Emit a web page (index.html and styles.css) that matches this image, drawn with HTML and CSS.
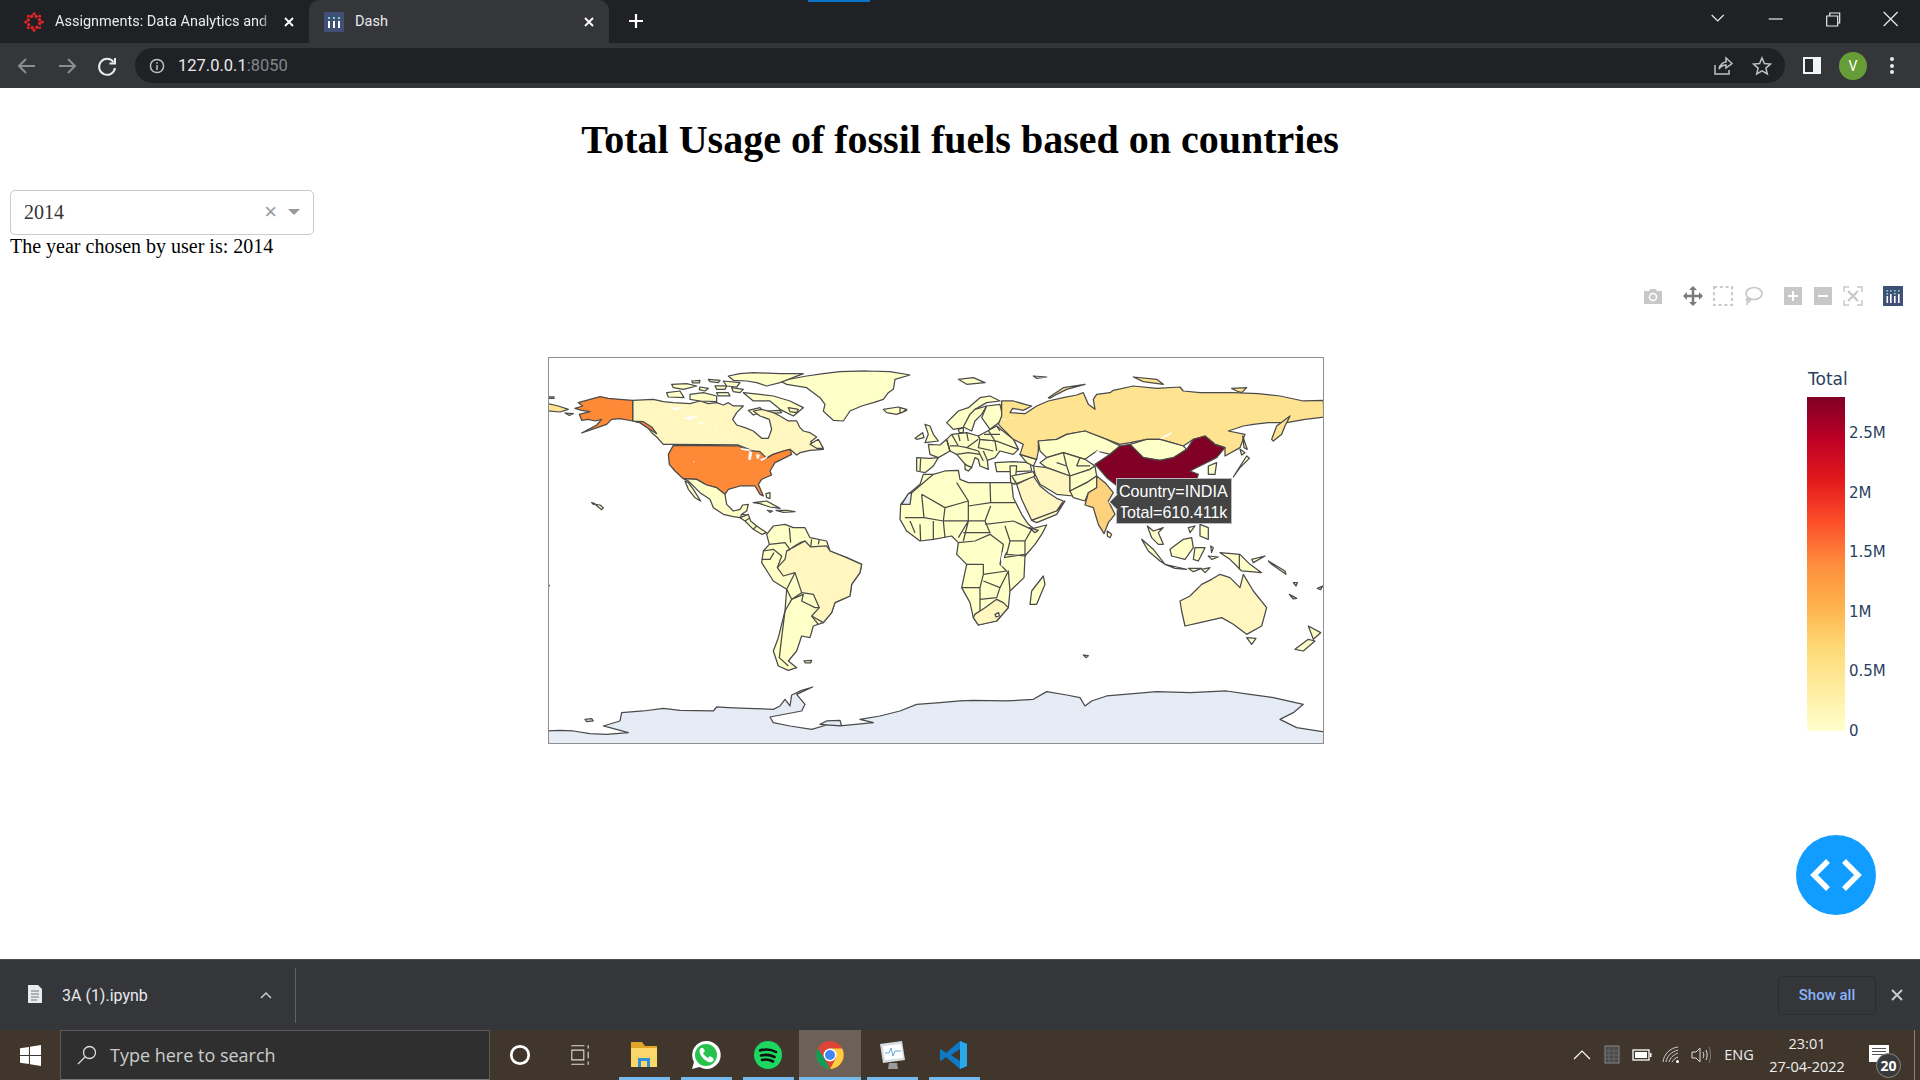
FILE: index.html
```html
<!DOCTYPE html>
<html lang="en">
	<head>
		<meta charset="utf-8">
		<title>Dash</title>
		<link rel="stylesheet" href="styles.css">
	</head>
	<body>
		<div class="loading-line"></div>
		<!-- browser tabs -->
		<div class="tabstrip">
			<div class="tab">
				<svg class="favicon" viewBox="0 0 24 24"><g fill="#e72429"><circle cx="12" cy="12" r="7.2" fill="none" stroke="#e72429" stroke-width="3.6" stroke-dasharray="3.6 2.05"/><circle cx="12" cy="2" r="1.8"/><circle cx="12" cy="22" r="1.8"/><circle cx="2" cy="12" r="1.8"/><circle cx="22" cy="12" r="1.8"/><circle cx="5" cy="5" r="1.6"/><circle cx="19" cy="5" r="1.6"/><circle cx="5" cy="19" r="1.6"/><circle cx="19" cy="19" r="1.6"/></g></svg>
				<span class="tab-title fade">Assignments: Data Analytics and</span>
				<svg class="tab-close" viewBox="0 0 12 12"><path d="M2 2L10 10M10 2L2 10"/></svg>
			</div>
			<div class="tab active">
				<svg class="favicon" viewBox="0 0 20 20"><rect width="20" height="20" fill="#3f4f75"/><g fill="#fff"><rect x="4" y="9" width="2" height="7"/><rect x="9" y="9" width="2" height="7"/><rect x="14" y="9" width="2" height="7"/></g><g fill="#7fd6c8"><rect x="4" y="5" width="2" height="2"/><rect x="9" y="5" width="2" height="2"/><rect x="14" y="5" width="2" height="2"/></g></svg>
				<span class="tab-title">Dash</span>
				<svg class="tab-close" viewBox="0 0 12 12"><path d="M2 2L10 10M10 2L2 10"/></svg>
			</div>
			<svg class="new-tab" viewBox="0 0 16 16"><path d="M8 1V15M1 8H15"/></svg>
			<div class="window-controls">
				<svg viewBox="0 0 56 20"><path d="M22 6L28 12L34 6" stroke-width="1"/></svg>
				<svg viewBox="0 0 56 20"><path d="M21 10H35"/></svg>
				<svg viewBox="0 0 56 20"><path d="M22 7H33V17H22ZM25 7V4H35V14H33"/></svg>
				<svg viewBox="0 0 56 20"><path d="M21 3L35 17M35 3L21 17"/></svg>
			</div>
		</div>

		<!-- address bar -->
		<div class="toolbar">
			<svg class="tool dim" viewBox="0 0 40 24"><path d="M28 12H13M19 5L12 12L19 19"/></svg>
			<svg class="tool dim" viewBox="0 0 40 24"><path d="M12 12H27M21 5L28 12L21 19"/></svg>
			<svg class="tool" viewBox="0 0 40 24"><path d="M26.5 8A8 8 0 1 0 28 14M28 4V9.5H22.5" stroke-width="2"/></svg>
			<div class="omnibox">
				<svg class="info" viewBox="0 0 16 16"><circle cx="8" cy="8" r="6.6"/><path d="M8 7V12M8 4.2V5.8"/></svg>
				<span class="url">127.0.0.1<span class="port">:8050</span></span>
				<svg class="omni-btn" viewBox="0 0 20 20"><path d="M2 9V18H16V14M6 13C7 8 11 6 13 6V2L19 7.5L13 12V9C10 9 8 10 6 13Z"/></svg>
				<svg class="omni-btn star" viewBox="0 0 20 20"><path d="M10 2L12.4 7.6L18.5 8.1L13.9 12.1L15.3 18L10 14.9L4.7 18L6.1 12.1L1.5 8.1L7.6 7.6Z"/></svg>
			</div>
			<div class="toolbar-right">
				<div class="side-panel"></div>
				<div class="avatar">V</div>
				<div class="dots"><i></i><i></i><i></i></div>
			</div>
		</div>

		<!-- the dash page -->
		<div class="page">
			<h1>Total Usage of fossil fuels based on countries</h1>
			<div class="dropdown">
				<span class="dropdown-value">2014</span>
				<span class="dropdown-clear">×</span>
				<span class="dropdown-arrow"></span>
			</div>
			<div class="year-text">The year chosen by user is: 2014</div>

			<div class="modebar">
				<div class="modebar-group">
					<svg viewBox="0 0 20 20"><path fill="#c8c8c8" d="M1 5H6L7.5 3H12.5L14 5H19V18H1Z"/><circle cx="10" cy="11" r="4.3" fill="#fff"/><circle cx="10" cy="11" r="2.8" fill="#c8c8c8"/></svg>
				</div>
				<div class="modebar-group">
					<svg viewBox="0 0 20 20"><path fill="none" stroke="#7a7a7a" stroke-width="2.5" d="M10 2V18M2 10H18"/><path fill="#7a7a7a" d="M10 0L14 4H6ZM10 20L14 16H6ZM0 10L4 6V14ZM20 10L16 6V14Z"/></svg>
					<svg viewBox="0 0 20 20"><rect x="1" y="1" width="18" height="18" fill="none" stroke="#c8c8c8" stroke-width="2" stroke-dasharray="3 2.8"/></svg>
					<svg viewBox="0 0 20 20"><ellipse cx="11" cy="7.5" rx="8" ry="6" fill="none" stroke="#c8c8c8" stroke-width="1.7"/><path fill="none" stroke="#c8c8c8" stroke-width="1.7" d="M5 12C2 13 4 17 7 15C8 14 6 12 5 13L4 19"/></svg>
				</div>
				<div class="modebar-group">
					<svg viewBox="0 0 20 20"><path fill="#c8c8c8" fill-rule="evenodd" d="M1 1H19V19H1ZM9 5V9H5V11H9V15H11V11H15V9H11V5Z"/></svg>
					<svg viewBox="0 0 20 20"><path fill="#c8c8c8" fill-rule="evenodd" d="M1 1H19V19H1ZM5 9V11H15V9Z"/></svg>
					<svg viewBox="0 0 20 20"><path fill="none" stroke="#c8c8c8" stroke-width="1.5" d="M1 6V1H6M14 1H19V6M19 14V19H14M6 19H1V14"/><path fill="none" stroke="#c8c8c8" stroke-width="2.2" d="M5 5L15 15M15 5L5 15"/></svg>
				</div>
				<div class="modebar-group">
					<svg viewBox="0 0 20 20"><rect width="20" height="20" fill="#3f4f75"/><g fill="#fff"><rect x="3.5" y="10" width="1.6" height="7"/><rect x="7" y="8" width="1.6" height="9"/><rect x="11" y="10" width="1.6" height="7"/><rect x="15" y="8" width="1.6" height="9"/></g><g fill="#7fd6c8"><rect x="3.5" y="4" width="1.6" height="1.6"/><rect x="7" y="4" width="1.6" height="1.6"/><rect x="11" y="4" width="1.6" height="1.6"/><rect x="15" y="4" width="1.6" height="1.6"/><rect x="3.5" y="7" width="1.6" height="1.6"/><rect x="11" y="7" width="1.6" height="1.6"/></g></svg>
				</div>
			</div>

			<div class="plot">
				<div class="map">
					<svg class="geo" viewBox="0 0 776 387">
						<!-- drawn in 3x units, western half -->
						<g transform="translate(-8 -6) scale(.33333)">
							<path class="nodata" d="M10 1140L60 1138L100 1140L150 1148L200 1150L265 1145L210 1130L190 1125L240 1110L245 1085L310 1080L370 1072L420 1078L520 1080L530 1068L565 1070L620 1072L700 1075L720 1065L735 1045L750 1065L755 1032L785 1018L818 1008L770 1030L795 1060L785 1080L690 1098L700 1115L750 1125L815 1135L860 1122L905 1125L900 1108L860 1110L840 1120L900 1125L1000 1115L960 1105L1020 1095L1080 1080L1130 1060L1200 1055L1260 1050L1300 1048L1400 1050L1480 1045L1520 1022L1580 1032L1620 1040L1635 1065L1655 1050L1700 1035L1780 1028L1850 1022L1950 1025L2060 1020L2130 1030L2200 1040L2290 1060L2260 1085L2220 1105L2270 1130L2370 1145L2370 1195L10 1195Z"/>
							<path class="nodata" d="M135 1105L155 1103L160 1110L140 1112Z"/>

							<!-- greenland and arctic -->
							<path class="land" d="M720 90L800 75L850 68L900 62L980 60L1050 62L1110 72L1065 85L1060 115L1045 125L1030 145L1000 155L965 165L930 180L910 210L880 208L860 190L850 180L855 160L840 140L820 125L800 110L740 100Z"/>
							<path class="land" d="M1030 175L1075 168L1100 178L1070 190L1040 185Z"/>
							<path class="land" d="M565 75L600 68L640 65L720 68L790 68L720 95L680 105L650 95L620 90L580 88Z"/>
							<path class="land" d="M610 125L660 130L700 135L750 150L790 170L760 195L720 175L690 150L640 150Z"/>
							<path class="land" d="M450 130L490 125L530 135L530 152L480 150L450 145Z"/>
							<path class="land" d="M380 125L420 120L432 140L385 138Z"/>
							<path class="land" d="M395 100L440 98L470 105L430 115L400 110Z"/>
							<path class="land" d="M505 85L540 88L535 95L510 92Z"/>
							<path class="land" d="M455 90L480 88L478 96L458 96Z"/>
							<path class="land" d="M525 105L560 105L555 115L530 115Z"/>
							<path class="land" d="M550 90L600 95L590 108L560 105Z"/>
							<path class="land" d="M530 125L565 125L570 135L535 135Z"/>
							<path class="land" d="M575 110L610 115L600 125L580 122Z"/>
							<path class="land" d="M480 108L505 112L495 120L478 116Z"/>
							<path class="land" d="M625 178L660 170L670 182L640 192Z"/>
							<path class="land" d="M680 180L720 178L725 185L690 188Z"/>
							<path class="land" d="M745 170L775 175L770 185L750 182Z"/>

							<!-- north america -->
							<path class="canada" d="M278 148L340 145L370 152L400 155L450 158L480 150L505 158L530 155L550 162L565 155L580 165L610 165L590 185L578 205L590 222L615 230L640 240L665 262L685 262L695 235L688 205L660 195L640 180L665 175L700 185L720 195L745 210L770 210L780 230L790 240L810 245L830 258L812 272L835 290L850 295L810 298L780 305L770 312L750 295L730 300L700 310L670 325L640 300L595 282L400 280L370 280L350 258L335 245L325 232L300 215L278 210Z"/>
							<path class="land" d="M810 280L835 265L850 292L830 292Z"/>
							<path class="white" d="M385 170L430 168L410 178ZM430 200L480 192L450 208ZM470 215L500 212L480 220ZM525 225L535 228L528 232ZM540 250L570 275L550 260Z"/>
							<path class="alaska" d="M278 148L240 145L205 142L180 137L150 145L115 155L128 165L105 172L125 178L150 182L118 190L125 208L145 205L165 210L185 205L170 222L125 246L165 232L200 220L215 205L240 203L278 210L300 215L325 232L350 248L335 228L310 212L278 210Z"/>
							<path class="alaska" d="M400 283L595 285L625 298L660 302L680 322L700 310L730 300L750 295L755 310L725 325L705 335L690 360L695 372L665 385L655 400L670 435L660 430L645 405L600 405L565 415L555 430L530 410L500 402L470 385L430 383L405 360L388 340L385 310Z"/>
							<path class="white" d="M600 290L640 297L625 300L605 296ZM628 300L637 304L632 328L624 325ZM648 308L660 312L655 325L650 322ZM660 325L685 316L680 322L665 330Z"/>
							<path class="land" d="M430 383L470 385L500 402L530 410L555 430L560 460L580 480L600 475L608 462L625 460L620 480L605 490L600 500L580 497L550 490L520 470L510 445L480 425L445 390Z"/>
							<path class="land" d="M445 395L460 415L482 450L465 440L445 415L435 390Z"/>
							<path class="land" d="M600 500L625 490L632 510L650 525L680 545L665 550L640 535L615 510Z"/>
							<path class="border" d="M605 490L620 492M615 510L630 500M640 535L650 525"/>
							<path class="land" d="M640 455L680 450L720 472L690 468L660 458Z"/>
							<path class="land" d="M708 478L740 478L765 482L730 484Z"/>
							<path class="land" d="M682 478L698 480L690 484Z"/>
							<path class="land" d="M678 428L690 425L690 442L680 440Z"/>
							<path class="land" d="M155 455L165 458L160 460ZM165 460L180 462L190 470L185 476L175 468Z"/>
							<path class="russia" d="M10 155L55 165L85 175L60 183L10 178Z"/>
							<path class="land" d="M10 137L42 138L42 142L10 142Z"/>
							<path class="land" d="M75 186L100 188L88 193Z"/>

							<!-- south america -->
							<path class="land" d="M680 550L700 525L735 520L760 530L795 530L810 560L860 570L870 600L920 620L965 640L960 665L935 700L930 735L885 755L875 785L850 815L820 825L810 860L785 855L780 870L770 900L745 930L770 950L745 958L715 945L700 900L715 860L735 780L740 715L700 690L665 635L670 600L688 580Z"/>
							<path class="canada" d="M740 600L795 570L812 588L860 585L870 600L920 620L965 640L960 665L935 700L930 735L885 755L875 785L850 815L815 795L838 770L820 730L785 725L765 665L730 675L712 650L735 625Z"/>
							<path class="border" d="M688 580L735 575L750 595L740 600M748 530L752 575M795 570L780 575L755 590M812 588L815 565M835 580L838 565M670 600L700 595L725 615L712 650M665 625L690 625L702 605M740 715L765 665M740 715L755 745L785 725M755 745L790 730L785 750L825 770L838 770M755 745L735 780L725 860L718 920L745 945M815 795L835 820"/>
							<path class="land" d="M792 930L815 928L812 936L796 936Z"/>
							<path class="white" d="M460 330L465 332L460 334Z"/>
							<path class="border" d="M25 700L29 706"/>
						</g>

						<!-- eastern half -->
						<g transform="translate(352 -6) scale(.33333)">
							<!-- africa -->
							<path class="land" d="M70 370L100 370L135 360L175 358L180 385L205 395L270 395L335 395L340 440L365 490L385 520L400 532L440 522L425 550L405 580L375 615L372 680L330 720L325 770L290 810L235 822L220 800L210 755L185 710L200 640L170 610L175 575L155 555L100 565L60 570L20 540L0 505L2 460L30 425L60 400Z"/>
							<path class="nodata" d="M5 460L25 428L35 425L30 460Z"/>
							<path class="nodata" d="M388 530L415 538L405 545Z"/>
							<path class="border" d="M100 370L65 400L35 425M65 430L72 500L15 500M65 430L135 470L205 450L170 395M135 470L130 510L72 500M205 450L205 510L130 510M270 395L272 455L205 465M272 455L345 455M272 465L255 510L205 510M255 520L340 510M130 510L135 560M100 510L100 565M60 520L62 570M30 510L45 545M175 560L205 510M205 510L190 570M190 545L270 545L255 510M175 575L225 570L270 550L310 580L300 640L320 660L250 670L250 640L200 640M310 620L375 610M185 710L240 710L250 670M240 710L240 780L225 790M240 745L290 740L300 710L250 690M290 745L320 768M330 720L325 660L300 710M340 510L395 535L375 570L330 570L315 525M375 570L375 615L320 610L330 570M300 640L320 605"/>
							<path class="canada" d="M225 790L240 780L255 770L290 745L310 755L325 770L290 810L235 822L220 800Z"/>
							<path class="land" d="M285 790L296 785L298 795L288 798Z"/>
							<path class="land" d="M390 760L395 720L430 675L435 700L410 760Z"/>
							<path class="white" d="M303 625L306 605L314 600L310 640L305 650Z"/>

							<!-- europe -->
							<path class="land" d="M50 320L90 322L115 320L100 345L75 365L50 360Z"/>
							<path class="border" d="M62 322L60 360"/>
							<path class="land" d="M85 280L120 282L140 265L150 300L115 320L90 310Z"/>
							<path class="land" d="M75 220L90 225L100 250L115 270L75 275L85 250Z"/>
							<path class="land" d="M45 262L68 245L72 260L50 265Z"/>
							<path class="land" d="M140 265L155 250L200 245L235 255L240 265L290 270L355 295L340 310L300 300L285 320L262 328L265 355L240 345L235 325L225 320L215 350L200 345L170 310L150 300Z"/>
							<path class="border" d="M140 265L150 300M155 250L175 285L200 290L235 265M175 250L180 270M200 245L205 270M240 265L235 290L280 300M200 290L235 300M235 300L250 330M205 305L240 310M170 310L205 305M285 270L290 300M340 265L355 295M150 285L175 285M250 300L262 328"/>
							<path class="land" d="M235 255L290 225L340 265L355 295L290 270L240 265Z"/>
							<path class="border" d="M265 238L285 270M290 225L300 240M252 250L300 250"/>
							<path class="land" d="M140 215L175 180L205 170L240 140L270 135L300 150L260 155L225 175L210 190L190 230L160 235Z"/>
							<path class="land" d="M190 228L210 190L225 175L260 165L245 190L225 210L215 240Z"/>
							<path class="land" d="M260 165L300 160L310 205L270 235L245 200Z"/>
							<path class="land" d="M175 235L190 230L190 245L178 245Z"/>
							<path class="land" d="M285 335L340 332L390 335L395 360L340 362L290 362Z"/>
							<path class="land" d="M195 340L215 350L205 360L195 355Z"/>
							<path class="land" d="M330 345L350 345L345 400L332 395Z"/>
							<path class="land" d="M360 310L410 325L400 345L380 335L372 325Z"/>
							<path class="land" d="M0 170L20 175L5 185L0 185Z"/>

							<!-- russia -->
							<path class="russia" d="M305 150L340 150L375 160L395 165L370 178L338 172L330 185L375 188L410 165L445 150L490 140L530 132L550 125L565 160L585 175L580 145L590 130L630 125L640 118L700 105L770 112L840 108L850 120L900 125L1000 125L1075 128L1140 135L1210 150L1270 148L1272 198L1215 205L1160 215L1105 215L1060 220L1030 225L985 240L1035 250L1020 290L975 315L975 290L945 280L915 255L880 265L850 285L815 275L780 265L740 265L690 275L660 280L620 265L555 240L500 250L470 265L415 270L415 300L410 325L360 310L370 280L340 265L295 220L305 195Z"/>
							<path class="white" d="M780 262L815 242L812 250L785 265ZM305 205L322 205L315 208ZM330 197L342 205L332 202Z"/>
							<path class="russia" d="M1115 265L1130 225L1170 195L1155 225L1145 250L1120 270Z"/>
							<path class="russia" d="M445 140L490 110L555 100L500 115L470 130L450 142Z"/>
							<path class="land" d="M175 85L220 80L255 95L200 100Z"/>
							<path class="land" d="M400 75L440 78L410 82Z"/>
							<path class="russia" d="M700 78L770 85L790 100L730 92Z"/>
							<path class="russia" d="M995 112L1040 110L1025 125L1010 120Z"/>
							<path class="russia" d="M1028 255L1042 295L1032 290Z"/>

							<!-- asia -->
							<path class="land" d="M415 270L470 265L500 250L555 240L620 265L660 285L630 310L590 300L555 325L490 305L440 320L420 300Z"/>
							<path class="white" d="M585 302L615 295L590 305Z"/>
							<path class="land" d="M440 320L490 305L555 325L585 345L570 355L510 375L440 350L420 335Z"/>
							<path class="border" d="M490 305L500 345L510 375M470 335L500 345M540 320L530 345L570 345"/>
							<path class="land" d="M690 280L740 265L780 265L850 285L860 295L820 320L780 328L730 320Z"/>
							<path class="canada" d="M400 345L440 350L510 375L510 420L520 435L470 430L420 400L405 370Z"/>
							<path class="land" d="M510 375L570 355L585 345L590 375L560 395L510 420Z"/>
							<path class="land" d="M510 420L560 395L590 375L590 410L565 425L555 450L520 440Z"/>
							<path class="canada" d="M350 400L400 375L420 405L445 425L470 442L490 450L470 480L395 508L365 445Z"/>
							<path class="land" d="M335 375L400 362L405 375L350 398Z"/>
							<path class="land" d="M395 508L470 480L495 450L470 490L410 515Z"/>
							<path class="india" d="M590 375L615 395L640 425L625 450L645 490L625 515L612 548L595 520L580 470L555 462L565 425L590 410Z"/>
							<path class="land" d="M622 540L635 550L630 560L622 555Z"/>
							<path class="china" d="M585 340L630 310L660 285L690 280L730 320L780 328L820 320L860 295L880 265L915 255L945 280L975 290L950 320L900 345L870 360L895 370L890 385L860 440L800 440L700 440L645 400L620 380L590 345Z"/>
							<path class="land" d="M925 345L950 335L945 370L925 370Z"/>
							<path class="land" d="M1005 370L1040 315L1048 322L1020 350L1000 378Z"/>
							<path class="land" d="M1020 295L1035 305L1025 312Z"/>
							<path class="land" d="M742 525L760 540L790 530L775 545L790 580L775 580L755 560Z"/>

							<!-- islands -->
							<path class="land" d="M725 565L760 595L795 640L780 630L745 600Z"/>
							<path class="land" d="M795 640L830 648L860 655L825 652Z"/>
							<path class="land" d="M810 595L850 565L875 560L880 590L855 625L815 615Z"/>
							<path class="land" d="M885 590L915 590L895 630L880 625Z"/>
							<path class="land" d="M900 520L925 530L925 565L900 555Z"/>
							<path class="land" d="M865 652L905 652L880 662Z"/>
							<path class="land" d="M905 655L930 650L915 665Z"/>
							<path class="land" d="M925 615L955 618L935 625Z"/>
							<path class="land" d="M932 585L940 590L935 605Z"/>
							<path class="land" d="M865 530L885 525L870 545Z"/>
							<path class="land" d="M960 605L1020 610L1050 640L1085 665L1025 660L990 625Z"/>
							<path class="border" d="M1018 610L1018 655"/>
							<path class="land" d="M1055 625L1095 615L1060 635Z"/>
							<path class="land" d="M1105 630L1155 660L1158 670L1115 640Z"/>
							<path class="land" d="M1180 695L1192 695L1188 705Z"/>
							<path class="land" d="M1252 712L1268 705L1262 716Z"/>
							<path class="land" d="M1168 730L1190 742L1180 744Z"/>
							<path class="land" d="M550 912L565 914L558 920Z"/>

							<!-- australia, new zealand -->
							<path class="canada" d="M840 750L870 735L905 700L935 685L960 670L990 680L1020 710L1030 670L1060 720L1100 770L1085 825L1040 850L1000 820L965 800L900 815L855 825L845 780Z"/>
							<path class="land" d="M1040 860L1068 862L1055 880Z"/>
							<path class="land" d="M1185 895L1225 865L1245 870L1210 900Z"/>
							<path class="land" d="M1225 825L1262 845L1240 865Z"/>
						</g>
					</svg>
					<div class="hover-label">Country=INDIA<br>Total=610.411k</div>
				</div>

				<div class="colorbar">
					<div class="colorbar-title">Total</div>
					<div class="colorbar-body">
						<div class="colorbar-scale"></div>
						<div class="colorbar-ticks">
							<span>2.5M</span>
							<span>2M</span>
							<span>1.5M</span>
							<span>1M</span>
							<span>0.5M</span>
							<span>0</span>
						</div>
					</div>
				</div>
			</div>

			<div class="debug-btn">
				<svg viewBox="0 0 80 80"><path d="M32 26L18 40L32 54M48 26L62 40L48 54"/></svg>
			</div>
		</div>

		<!-- downloads shelf -->
		<div class="downloads">
			<svg class="file-icon" viewBox="0 0 14 18"><path fill="#e8eaed" d="M0 0H10L14 4V18H0Z"/><path stroke="#777" d="M3 6H11M3 9H11M3 12H11M3 15H9"/></svg>
			<span class="file-name">3A (1).ipynb</span>
			<svg class="file-caret" viewBox="0 0 12 8"><path d="M1 7L6 2L11 7"/></svg>
			<div class="shelf-sep"></div>
			<div class="show-all">Show all</div>
			<svg class="shelf-close" viewBox="0 0 12 12"><path d="M1 1L11 11M11 1L1 11"/></svg>
		</div>

		<!-- windows taskbar -->
		<div class="taskbar">
			<div class="start">
				<svg viewBox="0 0 20 20"><path fill="#fff" d="M0 3L8.5 1.8V9.5H0ZM9.5 1.6L20 0V9.5H9.5ZM0 10.5H8.5V18.2L0 17ZM9.5 10.5H20V20L9.5 18.4Z"/></svg>
			</div>
			<div class="search">
				<svg viewBox="0 0 20 20"><circle cx="12.5" cy="7.5" r="6" fill="none" stroke="#ddd" stroke-width="1.3"/><path stroke="#ddd" stroke-width="1.3" d="M8 12L1 19"/></svg>
				<span>Type here to search</span>
			</div>
			<div class="task-btn"><svg viewBox="0 0 22 22"><circle cx="11" cy="11" r="8" fill="none" stroke="#fff" stroke-width="2.5"/></svg></div>
			<div class="task-btn"><svg viewBox="0 0 22 22"><path fill="none" stroke="#ddd" d="M3 2.5H15M3 19.5H15M3.5 6.5H14.5V15.5H3.5ZM18.5 2V5M18.5 8V14M18.5 17V20"/></svg></div>
			<div class="app open">
				<svg viewBox="0 0 30 30"><path fill="#e0a526" d="M2 2H13L16 6H28V14H2Z"/><path fill="#fbd66a" d="M2 8H28V27H2Z"/><path fill="#2f8fd8" d="M9 27V18H21V27H18V21H12V27Z"/></svg>
			</div>
			<div class="app open">
				<svg viewBox="0 0 30 30"><path fill="#fff" d="M15 1A14 14 0 0 0 3 22L1 29L8.5 27A14 14 0 1 0 15 1Z"/><circle cx="15" cy="15" r="11" fill="#27c24c"/><path fill="#fff" d="M10 8C8 10 8 13 11 17C14 21 18 23 21 22C23 21 23 19 22 18L19 16L17 18C15 17 13 15 12 13L14 11L12 8Z"/></svg>
			</div>
			<div class="app open">
				<svg viewBox="0 0 30 30"><circle cx="15" cy="15" r="14" fill="#1ed760"/><path fill="none" stroke="#111" stroke-width="2.6" stroke-linecap="round" d="M7 10.5C12 9 18 9 23 12M8 15.5C12 14.5 17 14.5 21.5 17M9 20C13 19 16.5 19.5 20 21.5"/></svg>
			</div>
			<div class="app open active">
				<svg viewBox="0 0 30 30"><circle cx="15" cy="15" r="14" fill="#db4437"/><path fill="#0f9d58" d="M15 29A14 14 0 0 1 2.9 8L9 18L15 29Z"/><path fill="#ffcd40" d="M15 29L21 18L15 8.5H27.1A14 14 0 0 1 15 29Z"/><circle cx="15" cy="15" r="6.5" fill="#fff"/><circle cx="15" cy="15" r="5" fill="#4285f4"/></svg>
			</div>
			<div class="app open">
				<svg viewBox="0 0 30 30"><path fill="#d8dde2" d="M3 4L25 1L28 20L6 23Z"/><path fill="#fff" d="M6 6L24 4L26 18L8 20Z"/><path fill="none" stroke="#5fa8d8" d="M8 13L12 13L14 8L16 16L18 11L24 11"/><path fill="#9a9a9a" d="M12 23H20L21 29H11Z"/></svg>
			</div>
			<div class="app open">
				<svg viewBox="0 0 30 30"><path fill="#0e7ac4" d="M21 1L28 4V26L21 29L7 17L2 21L1 20V10L2 9L7 13ZM21 9L12 15L21 21Z"/><path fill="#29a9ec" d="M21 1L28 4V26L21 29Z"/></svg>
			</div>

			<div class="tray">
				<div class="tray-item"><svg viewBox="0 0 20 20"><path fill="none" stroke="#fff" stroke-width="1.2" d="M2 14L10 6L18 14"/></svg></div>
				<div class="tray-item"><svg viewBox="0 0 20 20"><rect x="3" y="1" width="14" height="17" fill="#4a4a4a" stroke="#888"/><path stroke="#666" d="M3 6H17M3 10H17M3 14H17M7 1V18M12 1V18"/></svg></div>
				<div class="tray-item"><svg viewBox="0 0 20 20"><rect x="1" y="5" width="16" height="10" fill="none" stroke="#fff" stroke-width="1.3"/><rect x="3" y="7" width="12" height="6" fill="#fff"/><rect x="18" y="8" width="1.5" height="4" fill="#fff"/></svg></div>
				<div class="tray-item"><svg viewBox="0 0 20 20"><path fill="none" stroke="#ccc" d="M1 17C2 9 8 3 16 2M4 17C5 11 9 7 16 5M7 17C8 13 11 10 16 8M10 17C11 15 13 13 16 12"/><circle cx="15.5" cy="16.5" r="1.5" fill="#fff"/></svg></div>
				<div class="tray-item narrow"><svg viewBox="0 0 20 20"><path fill="none" stroke="#ddd" d="M1 7H5L9 3V17L5 13H1ZM12 7C13 9 13 11 12 13M15 5C16.5 8 16.5 12 15 15"/><path fill="none" stroke="#777" d="M18 2C20 7 20 13 18 18"/></svg></div>
				<div class="tray-eng">ENG</div>
				<div class="clock">
					<span>23:01</span>
					<span>27-04-2022</span>
				</div>
				<div class="notify">
					<span class="notify-msg"><i></i><i></i><i></i></span>
					<span class="notify-count">20</span>
				</div>
				<div class="show-desktop"></div>
			</div>
		</div>
	</body>
</html>
```

FILE: styles.css
```css
* {
	box-sizing: border-box;
}
body {
	margin: 0;
	height: 1080px;
	display: flex;
	flex-direction: column;
	overflow: hidden;
	background-color: white;
	font-family: "Liberation Serif", serif;
}
svg {
	display: block;
}
.loading-line {
	position: absolute;
	top: 0;
	left: 808px;
	width: 62px;
	height: 2px;
	background-color: #0b74c9;
}

/* tabs */
.tabstrip {
	height: 43px;
	flex: none;
	display: flex;
	align-items: stretch;
	padding-left: 9px;
	background-color: #202124;
	color: #e8eaed;
	font-family: Roboto, sans-serif;
	font-size: 14.5px;
}
.tab {
	width: 300px;
	display: flex;
	align-items: center;
	padding: 0 14px 0 15px;
	gap: 11px;
}
.tab.active {
	background-color: #35363a;
	border-radius: 10px 10px 0 0;
}
.favicon {
	width: 20px;
	height: 20px;
	flex: none;
}
.tab-title {
	flex: 1;
	white-space: nowrap;
}
.fade {
	-webkit-mask-image: linear-gradient(to right, black 94%, transparent 101%);
	mask-image: linear-gradient(to right, black 94%, transparent 101%);
}
.tab-close {
	width: 12px;
	height: 12px;
	flex: none;
}
.tab-close path {
	stroke: white;
	stroke-width: 1.8;
}
.new-tab {
	width: 16px;
	height: 16px;
	margin: 13px 0 0 19px;
}
.new-tab path {
	stroke: white;
	stroke-width: 2.2;
}
.window-controls {
	margin-left: auto;
	display: flex;
	align-items: flex-start;
	padding: 9px 0 0 0;
	margin-right: 1px;
}
.window-controls svg {
	width: 57.4px;
	height: 20px;
}
.window-controls path {
	fill: none;
	stroke: #e8eaed;
	stroke-width: 1.2;
}

/* address bar */
.toolbar {
	height: 45px;
	flex: none;
	display: flex;
	align-items: center;
	padding-left: 7px;
	background-color: #35363a;
}
.tool {
	width: 40px;
	height: 24px;
	flex: none;
}
.tool path {
	fill: none;
	stroke: #e8eaed;
	stroke-width: 2;
}
.tool.dim path {
	stroke: #8b8d90;
}
.omnibox {
	width: 1650px;
	height: 35px;
	margin-left: 8px;
	display: flex;
	align-items: center;
	padding: 0 13px 0 14px;
	background-color: #202124;
	border-radius: 18px;
	font-family: Roboto, sans-serif;
	font-size: 16.5px;
}
.info {
	width: 16px;
	height: 16px;
	flex: none;
}
.info circle, .info path {
	fill: none;
	stroke: #bdc1c6;
	stroke-width: 1.5;
}
.url {
	margin-left: 13px;
	color: #e8eaed;
}
.port {
	color: #80868b;
}
.omni-btn {
	width: 20px;
	height: 20px;
	margin-left: auto;
}
.omni-btn path {
	fill: none;
	stroke: #bdc1c6;
	stroke-width: 1.5;
}
.omni-btn.star {
	margin-left: 19px;
}
.toolbar-right {
	display: flex;
	align-items: center;
	margin-left: 18px;
}
.side-panel {
	width: 18px;
	height: 17px;
	border: 2px solid #f1f3f4;
	background-image: linear-gradient(to right, #2a2b2e 55%, #f1f3f4 55%);
}
.avatar {
	width: 28px;
	height: 28px;
	margin-left: 18px;
	border-radius: 50%;
	background-color: #669d36;
	color: white;
	font-family: Roboto, sans-serif;
	font-size: 14px;
	line-height: 28px;
	text-align: center;
}
.dots {
	margin-left: 23px;
	display: flex;
	flex-direction: column;
	gap: 2.5px;
}
.dots i {
	width: 4px;
	height: 4px;
	border-radius: 50%;
	background-color: #e8eaed;
}

/* page */
.page {
	position: relative;
	flex: 1;
	padding: 0 10px;
	background-color: white;
	color: black;
	font-size: 20px;
}
h1 {
	margin: 29px 0 26.5px;
	font-size: 40px;
	line-height: 46px;
	text-align: center;
}
.dropdown {
	width: 304px;
	height: 45px;
	display: flex;
	align-items: center;
	padding: 0 13px;
	border: 1px solid #ccc;
	border-radius: 5px;
	color: #333;
}
.dropdown-value {
	flex: 1;
}
.dropdown-clear {
	color: #999;
	font-family: "Liberation Sans", sans-serif;
	font-size: 22px;
	margin-right: 11px;
}
.dropdown-arrow {
	border: 6.5px solid transparent;
	border-top-color: #999;
	border-bottom-width: 0;
}
.year-text {
	line-height: 23px;
}
.modebar {
	display: flex;
	justify-content: flex-end;
	margin: 23px 2px 0 0;
	height: 30px;
}
.modebar-group {
	display: flex;
	margin-left: 10px;
}
.modebar svg {
	width: 20px;
	height: 20px;
	margin: 5px;
}
.plot {
	display: flex;
	margin-top: 46px;
	align-items: flex-start;
}
.map {
	position: relative;
	width: 776px;
	height: 387px;
	margin-left: 538px;
	flex: none;
}
.geo {
	width: 776px;
	height: 387px;
	outline: 1.5px solid #8f8f8f;
	outline-offset: -1px;
	overflow: hidden;
}
.geo path {
	stroke: #4a4a4a;
	stroke-width: 1.25px;
	vector-effect: non-scaling-stroke;
	stroke-linejoin: round;
}
.geo .land { fill: #ffffc8; }
.geo .canada { fill: #fff6c0; }
.geo .russia { fill: #fee391; }
.geo .india { fill: #fed27c; }
.geo .alaska { fill: #fe8a38; }
.geo .china { fill: #800026; }
.geo .nodata { fill: #e5ecf6; }
.geo .border { fill: none; }
.geo .white {
	fill: white;
	stroke: none;
}
.hover-label {
	position: absolute;
	left: 568px;
	top: 121px;
	width: 116px;
	height: 46px;
	padding: 2px 0 0 2px;
	background-color: #444;
	border: 1px solid #bbb;
	color: white;
	font-family: "Liberation Sans", sans-serif;
	font-size: 16.1px;
	line-height: 21px;
	white-space: nowrap;
}
.hover-label::before {
	content: "";
	position: absolute;
	left: -6px;
	top: 17px;
	width: 11px;
	height: 11px;
	background-color: #444;
	border-left: 1px solid #fff;
	border-bottom: 1px solid #fff;
	transform: rotate(45deg);
}
.colorbar {
	margin-left: 483px;
	padding-top: 10px;
	color: #2a3f5f;
	font-family: "DejaVu Sans", sans-serif;
	flex: none;
}
.colorbar-title {
	font-size: 17px;
	line-height: 24px;
	margin: 0 0 6px 1px;
}
.colorbar-body {
	display: flex;
	align-items: flex-start;
	height: 334px;
}
.colorbar-scale {
	width: 38px;
	height: 334px;
	background-image: linear-gradient(to top, #ffffcc, #ffeda0, #fed976, #feb24c, #fd8d3c, #fc4e2a, #e31a1c, #bd0026, #800026);
}
.colorbar-ticks {
	display: flex;
	flex-direction: column;
	padding: 7.5px 0 0 4px;
	font-size: 15px;
}
.colorbar-ticks span {
	height: 59.6px;
	line-height: 59.6px;
}
.debug-btn {
	position: absolute;
	right: 44px;
	bottom: 44px;
	width: 80px;
	height: 80px;
	border-radius: 50%;
	background-color: #119dff;
}
.debug-btn path {
	fill: none;
	stroke: white;
	stroke-width: 5.5;
}

/* downloads */
.downloads {
	height: 71px;
	flex: none;
	display: flex;
	align-items: center;
	padding-left: 28px;
	background-color: #35363a;
	border-top: 1px solid #4a4b4f;
	color: #e8eaed;
	font-family: Roboto, sans-serif;
	font-size: 16px;
}
.file-icon {
	width: 14px;
	height: 18px;
	margin-bottom: 2px;
}
.file-name {
	width: 198px;
	margin-left: 20px;
}
.file-caret {
	width: 12px;
	height: 8px;
}
.file-caret path {
	fill: none;
	stroke: #c8cacc;
	stroke-width: 1.5;
}
.shelf-sep {
	width: 1px;
	height: 55px;
	margin-left: 23px;
	background-color: #5f6368;
}
.show-all {
	width: 98px;
	height: 39px;
	margin-left: auto;
	border: 1px solid #2b2c30;
	border-radius: 5px;
	color: #8ab4f8;
	font-size: 15px;
	font-weight: 500;
	line-height: 37px;
	text-align: center;
}
.shelf-close {
	width: 12px;
	height: 12px;
	margin: 0 17px 0 15px;
}
.shelf-close path {
	stroke: #c8cacc;
	stroke-width: 2;
}

/* taskbar */
.taskbar {
	height: 50px;
	flex: none;
	display: flex;
	background-color: #40362c;
	color: #eee;
	font-family: "Open Sans", sans-serif;
}
.start {
	width: 60px;
	display: flex;
	align-items: center;
	justify-content: center;
}
.start svg {
	width: 21px;
	height: 21px;
}
.search {
	width: 430px;
	display: flex;
	align-items: center;
	gap: 13px;
	padding-left: 16px;
	background-color: #2f2f2f;
	border: 1px solid #5a5a5a;
	border-bottom-color: #777;
	color: #ccc;
	font-size: 18px;
}
.search svg {
	width: 20px;
	height: 20px;
}
.task-btn {
	width: 60px;
	display: flex;
	align-items: center;
	justify-content: center;
}
.task-btn svg {
	width: 24px;
	height: 24px;
}
.task-btn + .app {
	margin-left: 3px;
}
.app {
	width: 62px;
	display: flex;
	align-items: center;
	justify-content: center;
}
.app svg {
	width: 30px;
	height: 30px;
}
.app.open {
	background-image: linear-gradient(#76b9ed, #76b9ed);
	background-size: 51px 3px;
	background-position: center bottom;
	background-repeat: no-repeat;
}
.app.active {
	background-color: #6c6158;
	background-size: 100% 3px;
}
.tray {
	margin-left: auto;
	display: flex;
	align-items: stretch;
	font-size: 14.5px;
}
.tray-item {
	width: 30px;
	display: flex;
	align-items: center;
	justify-content: center;
}
.tray-item.narrow {
	width: 28px;
}
.tray-item svg {
	width: 20px;
	height: 20px;
}
.tray-eng {
	width: 48px;
	line-height: 50px;
	text-align: center;
}
.clock {
	width: 88px;
	display: flex;
	flex-direction: column;
	justify-content: center;
	gap: 3px;
	text-align: center;
	line-height: 20px;
}
.notify {
	position: relative;
	width: 56px;
}
.notify-msg {
	position: absolute;
	left: 18px;
	top: 15px;
	width: 20px;
	height: 17px;
	display: flex;
	flex-direction: column;
	gap: 2px;
	padding: 3px;
	background-color: white;
}
.notify-msg i {
	height: 1px;
	background-color: #555;
}
.notify-count {
	position: absolute;
	left: 25px;
	top: 23px;
	width: 25px;
	height: 25px;
	border: 1px solid #888;
	border-radius: 50%;
	background-color: #3a3a3a;
	color: white;
	font-size: 14px;
	font-weight: 700;
	line-height: 23px;
	text-align: center;
}
.show-desktop {
	width: 13px;
	background-image: linear-gradient(#8a8278, #8a8278);
	background-size: 1px 100%;
	background-position: 7px 0;
	background-repeat: no-repeat;
}
```
